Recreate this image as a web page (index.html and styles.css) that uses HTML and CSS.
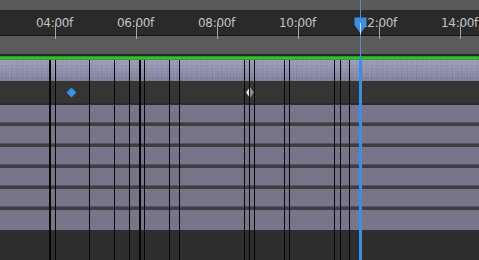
FILE: index.html
```
<!DOCTYPE html>
<html>
<head>
<meta charset="utf-8">
<link rel="stylesheet" href="styles.css">
</head>
<body>
<div class="timeline">
  <div class="topbar"></div>
  <div class="ruler">
    <div class="label"><span>04:00f</span><i class="tick"></i></div>
    <div class="label"><span>06:00f</span><i class="tick"></i></div>
    <div class="label"><span>08:00f</span><i class="tick"></i></div>
    <div class="label"><span>10:00f</span><i class="tick"></i></div>
    <div class="label"><span>12:00f</span><i class="tick"></i></div>
    <div class="label"><span>14:00f</span><i class="tick"></i></div>
  </div>
  <div class="band"></div>
  <div class="shadow"></div>
  <div class="work"></div>
  <div class="layerbar"></div>
  <div class="keyrow">
    <span class="key blue" style="left:71px"></span>
    <span class="key hold" style="left:250px"></span>
  </div>
  <div class="row"></div>
  <div class="row"></div>
  <div class="row"></div>
  <div class="row"></div>
  <div class="row"></div>
  <div class="row last"></div>
  <div class="bottom"></div>

  <div class="markers">
    <i class="mk thick" style="left:49px"></i>
    <i class="mk" style="left:55px"></i>
    <i class="mk" style="left:89px"></i>
    <i class="mk" style="left:114px"></i>
    <i class="mk" style="left:129px"></i>
    <i class="mk thick" style="left:139px"></i>
    <i class="mk" style="left:144px"></i>
    <i class="mk" style="left:169px"></i>
    <i class="mk" style="left:179px"></i>
    <i class="mk" style="left:244px"></i>
    <i class="mk" style="left:249px"></i>
    <i class="mk" style="left:254px"></i>
    <i class="mk" style="left:284px"></i>
    <i class="mk" style="left:289px"></i>
    <i class="mk" style="left:334px"></i>
    <i class="mk" style="left:340px"></i>
    <i class="mk" style="left:349px"></i>
  </div>

  <div class="playhead">
    <svg class="head" width="13" height="17" viewBox="0 0 13 17">
      <path d="M0.5 0.5 H12.5 V8 L6.5 16.5 L0.5 8 Z" fill="#3a8ee6"/>
      <line x1="6.5" y1="6" x2="6.5" y2="17" stroke="#cfe3f8" stroke-width="1"/>
    </svg>
  </div>
</div>
</body>
</html>
```
FILE: styles.css
```
* { box-sizing: border-box; }
html, body { margin: 0; padding: 0; }
body {
  width: 479px;
  height: 260px;
  overflow: hidden;
  background: #2e2e2e;
  font-family: "DejaVu Sans", Verdana, sans-serif;
}
.timeline {
  position: relative;
  width: 479px;
  height: 260px;
  display: flex;
  flex-direction: column;
}
.topbar { height: 10px; background: #5a5a5a; flex: none; }
.ruler {
  height: 26px;
  flex: none;
  background: #2a2a2a;
  border-bottom: 1px solid #121212;
  display: flex;
  padding-left: 14px;
}
.label {
  position: relative;
  width: 81px;
  flex: none;
  text-align: center;
}
.label span {
  display: block;
  margin-top: 6px;
  font-size: 12px;
  line-height: 14px;
  letter-spacing: -0.3px;
  color: #c4c4c4;
}
.tick {
  position: absolute;
  left: 41px;
  top: 13px;
  width: 1px;
  height: 16px;
  background: #a8a8a8;
}
.band { height: 18px; background: #5b5b5b; flex: none; }
.shadow { height: 2px; background: #262626; flex: none; }
.work {
  height: 4px;
  flex: none;
  background: linear-gradient(#16901a, #3fcc3a 50%, #1a9a1e);
}
.layerbar {
  height: 21px;
  flex: none;
  background:
    radial-gradient(circle at 1px 1px, rgba(255,255,255,0.06) 0 1px, transparent 1px) 0 0 / 3px 3px,
    radial-gradient(circle at 2px 2px, rgba(0,0,0,0.05) 0 1px, transparent 1px) 0 0 / 5px 4px,
    linear-gradient(#9c9bbb, #908fac 50%, #807f99);
}
.keyrow {
  position: relative;
  height: 24px;
  flex: none;
  background: #353535;
  border-bottom: 2px solid #2a2a2c;
}
.key {
  position: absolute;
  top: 12px;
}
.key.blue {
  width: 7px;
  height: 7px;
  margin: -4px 0 0 -3.5px;
  background: #3a90ea;
  transform: rotate(45deg);
}
.key.hold {
  width: 8px;
  height: 11px;
  margin: -6px 0 0 -4px;
  clip-path: polygon(50% 0, 100% 50%, 50% 100%, 0 50%);
  background: linear-gradient(90deg, #e4e4e4 55%, #8c8c8c 55%);
}
.row {
  height: 21px;
  flex: none;
  background: #767589;
  border-bottom: 3px solid #3d3d44;
  box-shadow: inset 0 -1px 0 #55545f;
}
.row.last { height: 20px; border-bottom: none; box-shadow: none; }
.bottom { flex: 1; background: #2e2e2e; }

.markers {
  position: absolute;
  left: 0;
  top: 60px;
  bottom: 0;
  width: 100%;
}
.mk {
  position: absolute;
  top: 0;
  bottom: 0;
  width: 1px;
  background: #050505;
}
.mk.thick { width: 2px; }

.playhead {
  position: absolute;
  left: 360px;
  top: 0;
  bottom: 0;
  width: 1px;
  background: #4a8fd8;
}
.playhead::after {
  content: "";
  position: absolute;
  left: -1px;
  top: 56px;
  bottom: 0;
  width: 3px;
  background: #3a8ee6;
}
.head {
  position: absolute;
  left: -6px;
  top: 17px;
}
```
